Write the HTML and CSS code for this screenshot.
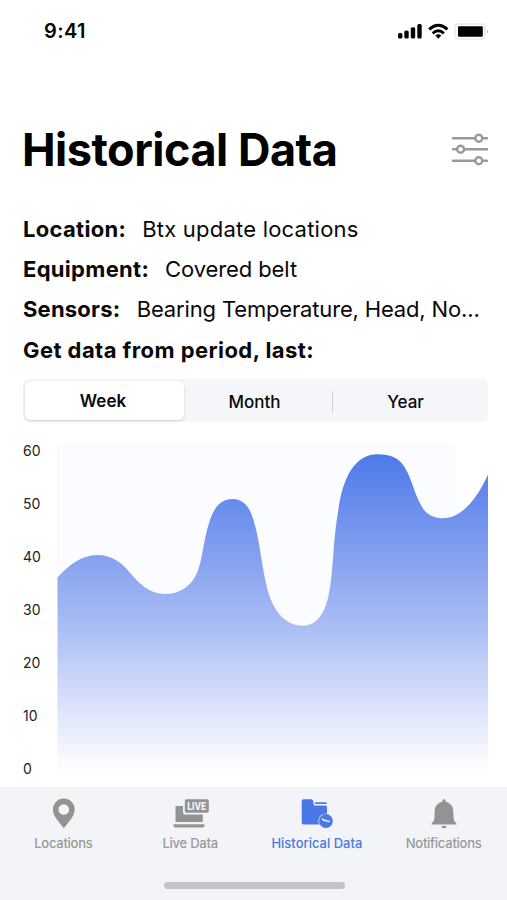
FILE: index.html
```html
<!DOCTYPE html>
<html lang="en">
<head>
<meta charset="utf-8">
<title>Historical Data</title>
<link rel="stylesheet" href="styles.css">
</head>
<body>
<div class="screen">
  <header class="status">
    <span class="time">9:41</span>
    <svg class="status-icons" width="92" height="20" viewBox="0 0 92 20">
      <rect x="0" y="12" width="4.4" height="5.5" rx="1.5"/>
      <rect x="6.3" y="9.5" width="4.4" height="8" rx="1.5"/>
      <rect x="12.8" y="6.3" width="4.4" height="11.2" rx="1.5"/>
      <rect x="19.3" y="3" width="4.4" height="14.5" rx="1.5"/>
      <g fill="none" stroke="#000" stroke-width="2.9">
        <path d="M31.2 8.3Q40.3 0.2 49.4 8.3"/>
        <path d="M34.7 12.3Q40.3 7.3 45.9 12.3"/>
      </g>
      <path d="M37.3 14.5Q40.3 12 43.3 14.5L40.3 17.7Z"/>
      <rect x="57.5" y="3.2" width="29.5" height="14.6" rx="2.5" fill="#fff" stroke="#ececec" stroke-width="1.8"/>
      <rect x="60" y="5.3" width="24.8" height="10.5" rx="1"/>
      <path d="M89 8.5q1.8 2 0 4z" fill="#aaa"/>
    </svg>
  </header>
  <main class="content">
    <div class="title-row">
      <h1>Historical Data</h1>
      <svg class="filter" width="38" height="34" viewBox="0 0 38 34" fill="none" stroke="#999" stroke-width="2.4" stroke-linecap="round">
        <path d="M2 5.2H24M32 5.2H36M2 16.3H5.5M14 16.3H36M2 27.8H24M32 27.8H36"/>
        <circle cx="27.8" cy="5.2" r="3.5"/><circle cx="9.6" cy="16.3" r="3.5"/><circle cx="27.8" cy="27.8" r="3.5"/>
      </svg>
    </div>
    <div class="details">
      <p class="location"><b>Location:</b><span class="value">Btx update locations</span></p>
      <p class="equipment"><b>Equipment:</b><span class="value">Covered belt</span></p>
      <p class="sensors"><b>Sensors:</b><span class="value">Bearing Temperature, Head, No...</span></p>
      <p class="period"><b>Get data from period, last:</b></p>
    </div>
    <div class="tabs">
      <div class="tab selected">Week</div>
      <div class="tab month">Month</div>
      <div class="tab year">Year</div>
    </div>
    <div class="chart">
      <div class="axis"><span>60</span><span>50</span><span>40</span><span>30</span><span>20</span><span>10</span><span>0</span></div>
      <svg class="plot" width="431" height="331" viewBox="57 444 431 331">
        <defs>
          <linearGradient id="area" gradientUnits="userSpaceOnUse" x1="0" y1="454" x2="0" y2="772">
            <stop offset="0" stop-color="#4e79e9"/>
            <stop offset=".5" stop-color="#a2b7f3"/>
            <stop offset=".8" stop-color="#dce4fb"/>
            <stop offset="1" stop-color="#fff"/>
          </linearGradient>
        </defs>
        <rect x="57" y="444" width="399" height="316" fill="#fafcff"/>
        <path fill="url(#area)" d="M57.5 577.5C68 566 81 555 97.5 555C112 555 122 563 130 572.7C139 583.5 150 594 164.7 594C178 594 189 588 195.5 576C203 562 202 544 210 520C215 505.5 222 499 232.7 499C241 499 247 504 250.5 512C259 532 260 556 266 583.3C272 612 286 625.7 302.3 625.7C315 625.7 324 616 328.3 596.7C334 571 332 548 338.3 510C343 477 355 454.3 377.7 454.3C391 454.3 399 458 404.5 467C413 481 415 497 423.3 509C428 515.5 435 518.3 443.3 518.3C462 518.3 478 497 488 474.5V775H57.5Z"/>
      </svg>
    </div>
  </main>
  <nav class="nav">
    <div class="items">
      <div class="item">
        <svg width="40" height="32" viewBox="0 0 40 32" fill="#939393"><path fill-rule="evenodd" d="M20.8 1.5A10.9 10.9 0 0 0 9.9 12.4C9.9 19.5 16 24.5 20.8 31.3C25.600 24.5 31.7 19.5 31.7 12.4A10.9 10.9 0 0 0 20.8 1.5ZM20.8 7.2a5.3 5.3 0 1 1 0 10.6a5.300 5.300 0 0 1 0-10.600Z"/></svg>
        <span>Locations</span>
      </div>
      <div class="item">
        <svg width="40" height="32" viewBox="0 0 40 32" fill="#939393"><path d="M5.500 9h7.500v6q0 2.500 2 2.500h17.800V25H5.500zM3.500 27.200h31v1.500q0 1.800-2 1.800h-27q-2 0-2-1.800z"/><rect x="14.800" y="2.200" width="24" height="13.500" rx="1.800"/><text class="live" x="17.300" y="12.700" textLength="19" lengthAdjust="spacingAndGlyphs">LIVE</text></svg>
        <span>Live Data</span>
      </div>
      <div class="item active">
        <svg width="40" height="32" viewBox="0 0 40 32"><path fill="#4b77e7" d="M4.700 4Q4.700 2.200 6.500 2.200H14.500Q16 2.200 16.300 4.200Q16.500 8.500 18 8.500H28.500Q30 8.500 30 10V16.500Q22 16.500 21.300 23.500Q21.300 26 22.500 27.400H6.500Q4.700 27.400 4.700 25.700ZM17.800 5.300H28.500Q30 5.300 30 7H18.500Q17.800 7 17.800 5.300Z"/><circle cx="28.900" cy="24" r="6.900" fill="#4b77e7"/><path d="M25.200 21.200Q26.500 24.300 28.700 23.300Q30 24.800 32.800 24.300" fill="none" stroke="#f4f6fc" stroke-width="1.400"/></svg>
        <span>Historical Data</span>
      </div>
      <div class="item">
        <svg width="40" height="32" viewBox="0 0 40 32" fill="#939393"><path d="M20 2Q21.500 2 21.800 4.800C27 6 29.400 10 29.400 15V20.500Q29.400 23.500 32.500 26.500V27.500H7.500V26.500Q10.600 23.500 10.600 20.500V15C10.600 10 13 6 18.200 4.800Q18.500 2 20 2ZM17.200 29h5.600q-.8 2.400-2.800 2.400t-2.800-2.400z"/></svg>
        <span>Notifications</span>
      </div>
    </div>
    <div class="home-bar"></div>
  </nav>
</div>
</body>
</html>
```
FILE: styles.css
```css
* { box-sizing: border-box; }
body { margin: 0; background: #fff; color: #080808; font-family: Inter, "Liberation Sans", sans-serif; }
.screen { width: 507px; height: 900px; display: flex; flex-direction: column; overflow: hidden; }
.status { height: 62px; padding: 0 18px 0 44px; display: flex; align-items: center; justify-content: space-between; flex: none; }
.time { font-size: 20px; font-weight: 600; letter-spacing: .4px; }
.status-icons { margin-left: auto; margin-right: -1px; }
.content { flex: 1; padding: 58px 19px 0 22px; min-height: 0; }
.title-row { height: 60px; display: flex; justify-content: space-between; align-items: center; }
h1 { margin: 0; font-size: 45px; line-height: 60px; font-weight: 700; letter-spacing: -.5px; white-space: nowrap; color: #000; }
.filter { display: block; margin-right: -1px; }
.details { padding: 29px 0 0 1px; }
.details p { margin: 0; height: 40.2px; line-height: 40.2px; font-size: 22px; letter-spacing: .3px; white-space: nowrap; }
.details b { font-weight: 700; }
.value { margin-left: 16px; }
.location .value { letter-spacing: .22px; }
.equipment .value { letter-spacing: -.1px; }
.sensors b { letter-spacing: .2px; }
.sensors .value { letter-spacing: -.16px; margin-left: 16.5px; }
.details .period { letter-spacing: .43px; line-height: 40.2px; }
.tabs { height: 43px; margin: 9px 0 0 1px; background: #f4f6fa; border-radius: 6px; padding: 2px 0 2px 2px; display: grid; grid-template-columns: 159px 149px 1fr; align-items: center; font-size: 17px; font-weight: 500; text-align: center; }
.tab { height: 39px; line-height: 42px; }
.selected { background: #fff; border-radius: 6px; box-shadow: 0 1px 3px rgba(0, 0, 0, .16); font-weight: 600; padding-right: 3px; line-height: 41px; }
.month { height: 22px; line-height: 22px; border-right: 1px solid #d0d1d5; padding-right: 7px; margin-top: 4px; }
.year { padding-right: 10px; }
.chart { margin-top: 22px; padding-left: 1px; display: flex; justify-content: space-between; }
.axis { width: 34px; flex: none; display: flex; flex-direction: column; margin-top: -18.5px; font-size: 14px; color: #222; }
.axis span { height: 52.9px; line-height: 52.9px; }
.plot { display: block; flex: none; }
.nav { height: 113px; background: #f2f4f8; flex: none; padding-top: 10px; display: flex; flex-direction: column; align-items: center; }
.items { width: 507px; display: grid; grid-template-columns: repeat(4, 1fr); height: 85px; align-content: start; }
.item { display: flex; flex-direction: column; align-items: center; font-size: 13px; line-height: 16px; font-weight: 500; letter-spacing: -.25px; color: #999; }
.item span { margin-top: 6px; }
.active { color: #4b77e7; letter-spacing: 0; }
.live { font: 800 10.5px Inter, sans-serif; letter-spacing: 0; fill: #f2f4f8; }
.home-bar { width: 181px; height: 7px; border-radius: 4px; background: #c3c4c5; margin-left: 2px; }
```
